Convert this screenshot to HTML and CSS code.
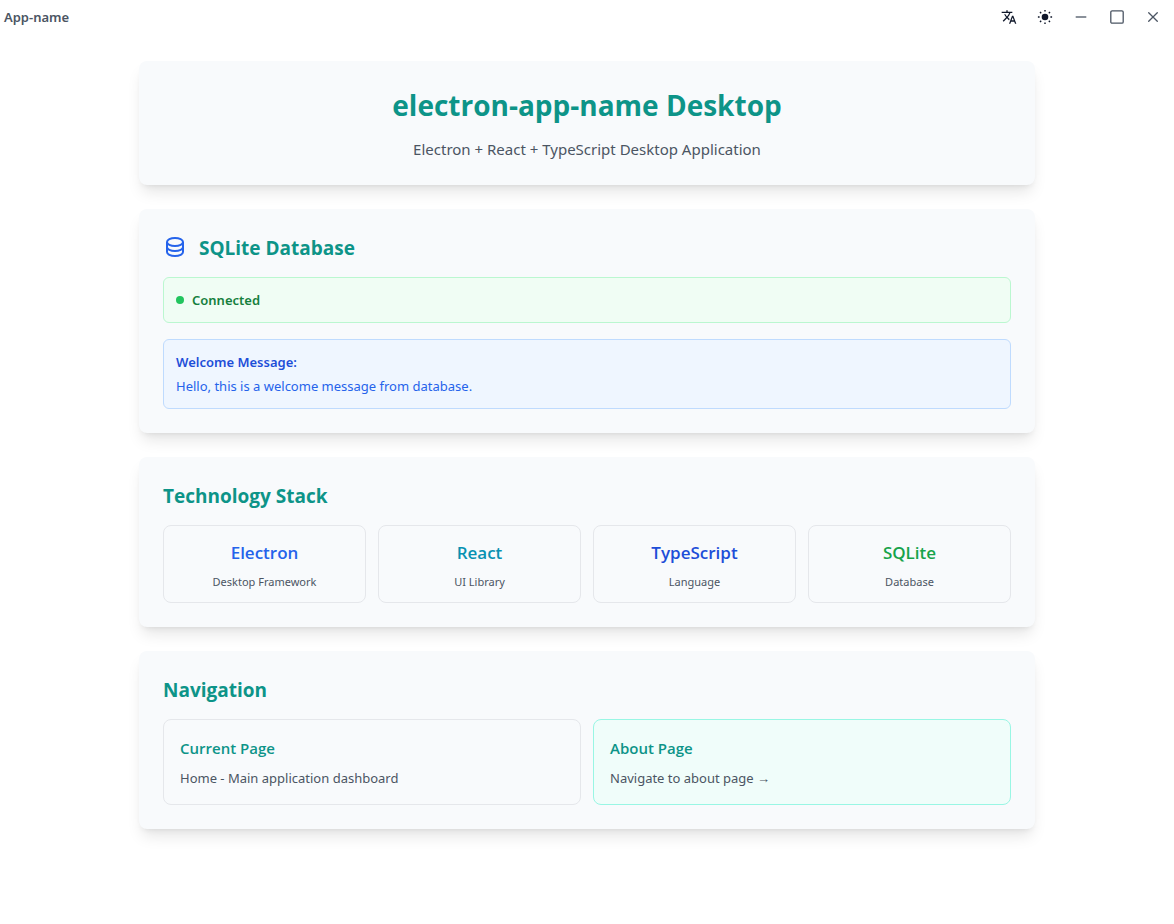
FILE: index.html
```html
<!DOCTYPE html>
<html lang="en">
<head>
<meta charset="utf-8">
<meta name="viewport" content="width=device-width, initial-scale=1">
<title>App-name</title>
<link rel="stylesheet" href="styles.css">
</head>
<body>
<header class="titlebar">
  <span class="titlebar-name">App-name</span>
  <div class="titlebar-actions">
    <button class="icon-button icon-dark" type="button" aria-label="Change language">
      <svg width="16" height="16" viewBox="0 0 24 24" fill="currentColor" aria-hidden="true"><path d="M12.87 15.07l-2.54-2.51.03-.03c1.74-1.94 2.98-4.17 3.71-6.53H17V4h-7V2H8v2H1v1.99h11.17C11.5 7.92 10.44 9.75 9 11.35 8.07 10.32 7.3 9.19 6.69 8h-2c.73 1.63 1.73 3.17 2.98 4.56l-5.09 5.02L4 19l5-5 3.11 3.11.76-2.04zM18.500 10h-2L12 22h2l1.120-3h4.750L21 22h2l-4.500-12zm-2.620 7l1.620-4.330L19.120 17h-3.240z"/></svg>
    </button>
    <button class="icon-button icon-dark" type="button" aria-label="Toggle theme">
      <svg width="16" height="16" viewBox="0 0 16 16" fill="currentColor" aria-hidden="true"><circle cx="8" cy="8" r="3.300"/><path d="M8 .9v1.700M8 13.400v1.700M.9 8h1.700M13.400 8h1.700M3 3l1.200 1.200M11.800 11.800L13 13M3 13l1.200-1.200M11.800 4.200L13 3" fill="none" stroke="currentColor" stroke-width="1.400"/></svg>
    </button>
    <button class="icon-button" type="button" aria-label="Minimize">
      <svg width="16" height="16" viewBox="0 0 16 16" fill="none" stroke="currentColor" stroke-width="1.300" aria-hidden="true"><path d="M2.700 8h10.600"/></svg>
    </button>
    <button class="icon-button" type="button" aria-label="Maximize">
      <svg width="16" height="16" viewBox="0 0 16 16" fill="none" stroke="currentColor" stroke-width="1.300" aria-hidden="true"><rect x="1.800" y="1.800" width="12.400" height="12.400" rx="1.300"/></svg>
    </button>
    <button class="icon-button" type="button" aria-label="Close">
      <svg width="16" height="16" viewBox="0 0 16 16" fill="none" stroke="currentColor" stroke-width="1.300" stroke-linecap="round" aria-hidden="true"><path d="M3.700 3.700l8.600 8.600M12.300 3.700l-8.600 8.600"/></svg>
    </button>
  </div>
</header>
<main class="content">
  <section class="card hero">
    <h1 class="hero-title">electron-app-name Desktop</h1>
    <p class="hero-text">Electron + React + TypeScript Desktop Application</p>
  </section>

  <section class="card">
    <h2 class="card-title">
      <svg class="card-icon" width="24" height="24" viewBox="0 0 24 24" fill="none" stroke="currentColor" stroke-width="2" stroke-linecap="round" stroke-linejoin="round" aria-hidden="true"><path d="M4 6v10c0 2.210 3.582 4 8 4s8-1.790 8-4V6M4 6c0 2.210 3.582 4 8 4s8-1.790 8-4M4 6c0-2.210 3.582-4 8-4s8 1.790 8 4m0 5c0 2.210-3.582 4-8 4s-8-1.790-8-4"/></svg>
      SQLite Database
    </h2>
    <div class="notices">
      <div class="notice notice-success"><span class="status-dot"></span>Connected</div>
      <div class="notice notice-info">
        <p class="notice-title">Welcome Message:</p>
        <p>Hello, this is a welcome message from database.</p>
      </div>
    </div>
  </section>

  <section class="card">
    <h2 class="card-title">Technology Stack</h2>
    <div class="tech-grid">
      <div class="tech"><h3 class="tech-name electron">Electron</h3><p class="tech-role">Desktop Framework</p></div>
      <div class="tech"><h3 class="tech-name react">React</h3><p class="tech-role">UI Library</p></div>
      <div class="tech"><h3 class="tech-name typescript">TypeScript</h3><p class="tech-role">Language</p></div>
      <div class="tech"><h3 class="tech-name sqlite">SQLite</h3><p class="tech-role">Database</p></div>
    </div>
  </section>

  <nav class="card" aria-labelledby="nav-title">
    <h2 class="card-title" id="nav-title">Navigation</h2>
    <div class="page-grid">
      <div class="page">
        <h3 class="page-title">Current Page</h3>
        <p class="page-text">Home - Main application dashboard</p>
      </div>
      <a class="page page-link" href="#about">
        <h3 class="page-title">About Page</h3>
        <p class="page-text">Navigate to about page →</p>
      </a>
    </div>
  </nav>
</main>
</body>
</html>
```
FILE: styles.css
```css
* {
  box-sizing: border-box;
}

body,
h1,
h2,
h3,
p {
  margin: 0;
}

body {
  background: #ffffff;
  color: #4b5563;
  font-family: "Noto Sans", "Open Sans", sans-serif;
  font-size: 13px;
  line-height: 20px;
}

h1,
h2,
h3 {
  font-family: "Open Sans", "Noto Sans", sans-serif;
}

.titlebar {
  display: flex;
  align-items: center;
  justify-content: space-between;
  padding: 0 5px 0 4px;
}

.titlebar-name {
  font-weight: 600;
}

.titlebar-actions {
  display: flex;
  gap: 4px;
}

.icon-button {
  display: flex;
  align-items: center;
  justify-content: center;
  width: 32px;
  height: 34px;
  padding: 0;
  border: 0;
  background: none;
  color: #4b5563;
}

.icon-dark {
  color: #0f172a;
}

.content {
  display: flex;
  flex-direction: column;
  gap: 24px;
  max-width: 944px;
  margin: 0 auto;
  padding: 27px 24px 24px;
}

.card {
  padding: 24px;
  border-radius: 8px;
  background: #f8fafc;
  box-shadow: 0 10px 15px -3px rgb(0 0 0 / 10%), 0 4px 6px -4px rgb(0 0 0 / 10%);
}

.hero {
  text-align: center;
}

.hero-title {
  margin-bottom: 12px;
  color: #0d9488;
  font-size: 28px;
  font-weight: 700;
  line-height: 40px;
}

.hero-text {
  font-size: 15px;
  line-height: 24px;
}

.card-title {
  display: flex;
  align-items: center;
  gap: 12px;
  margin-bottom: 14px;
  color: #0d9488;
  font-size: 19px;
  font-weight: 700;
  line-height: 30px;
}

.card-icon {
  color: #2563eb;
}

.notices {
  display: flex;
  flex-direction: column;
  gap: 16px;
}

.notice {
  padding: 12px;
  border: 1px solid;
  border-radius: 6px;
}

.notice-success {
  display: flex;
  align-items: center;
  gap: 8px;
  border-color: #bbf7d0;
  background: #f0fdf4;
  color: #15803d;
  font-weight: 600;
}

.status-dot {
  width: 8px;
  height: 8px;
  border-radius: 50%;
  background: #22c55e;
}

.notice-info {
  border-color: #bfdbfe;
  background: #eff6ff;
  color: #2563eb;
}

.notice-title {
  margin-bottom: 4px;
  color: #1d4ed8;
  font-weight: 600;
}

.tech-grid {
  display: grid;
  grid-template-columns: repeat(4, 1fr);
  gap: 12px;
}

.tech {
  padding: 12px;
  border: 1px solid #e5e7eb;
  border-radius: 8px;
  text-align: center;
}

.tech-name {
  margin-bottom: 6px;
  font-size: 17px;
  font-weight: 600;
  line-height: 30px;
}

.tech-role {
  font-size: 11px;
  line-height: 16px;
}

.electron {
  color: #2563eb;
}

.react {
  color: #0891b2;
}

.typescript {
  color: #1d4ed8;
}

.sqlite {
  color: #16a34a;
}

.page-grid {
  display: grid;
  grid-template-columns: repeat(2, 1fr);
  gap: 12px;
}

.page {
  padding: 16px;
  border: 1px solid #e5e7eb;
  border-radius: 8px;
}

.page-link {
  border-color: #99f6e4;
  background: #f0fdfa;
  color: inherit;
  text-decoration: none;
}

.page-title {
  margin-bottom: 8px;
  color: #0d9488;
  font-size: 15px;
  font-weight: 600;
  line-height: 24px;
}
```
